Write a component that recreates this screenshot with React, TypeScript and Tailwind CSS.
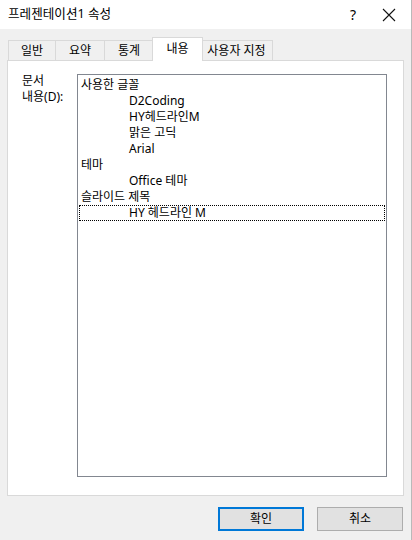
const FONT = "font-['Noto_Sans','Noto_Sans_CJK_KR',sans-serif]";

const TABS = ["일반", "요약", "통계", "내용", "사용자 지정"];
const ACTIVE = 3;

const ITEMS: { text: string; indent?: boolean; focus?: boolean }[] = [
  { text: "사용한 글꼴" },
  { text: "D2Coding", indent: true },
  { text: "HY헤드라인M", indent: true },
  { text: "맑은 고딕", indent: true },
  { text: "Arial", indent: true },
  { text: "테마" },
  { text: "Office 테마", indent: true },
  { text: "슬라이드 제목" },
  { text: "HY 헤드라인 M", indent: true, focus: true },
];

export default function App() {
  return (
    <div className={`${FONT} w-[412px] h-[540px] bg-[#f0f0f0] border-r border-[#b9b9b9] text-[12px] text-black flex flex-col`}>
      {/* Title bar */}
      <div className="h-[29px] bg-white flex items-center shrink-0">
        <span className="pl-2 flex-1 leading-none text-[12.6px]">프레젠테이션1 속성</span>
        <span className="w-[16px] text-center text-[14px] leading-none mr-[21px]">?</span>
        <svg width="14" height="14" viewBox="0 0 14 14" className="mr-[15px]" fill="none" stroke="#111" strokeWidth="1.1">
          <path d="M1 1L13 13M13 1L1 13" />
        </svg>
      </div>

      {/* Tabs */}
      <div className="mt-[8px] flex items-end pl-[8px] h-[23px] relative z-10">
        {TABS.map((t, i) =>
          i === ACTIVE ? (
            <div
              key={t}
              className="h-[24px] mb-[-1px] bg-white border border-b-0 border-[#d9d9d9] flex items-start justify-center pt-[2px] mx-[-2px] relative z-10"
              style={{ width: 51 }}
            >
              {t}
            </div>
          ) : (
            <div
              key={t}
              className="h-[20px] bg-[#f0f0f0] border border-b-0 border-[#d9d9d9] flex items-center justify-center -ml-px first:ml-0"
              style={{ width: i === 4 ? 73 : i === 0 ? 48 : 50 }}
            >
              {t}
            </div>
          )
        )}
      </div>

      {/* Panel */}
      <div className="mx-[7px] h-[436px] bg-white border border-[#d9d9d9] flex pt-[13px] pl-[14px] shrink-0">
        <div className="w-[55px] leading-[16px] -mt-px">
          <div>문서</div>
          <div>내용(D):</div>
        </div>
        <div className="w-[310px] h-[403px] border border-[#828790] bg-white pt-[2px] pl-px pr-px">
          {ITEMS.map((it) => (
            <div
              key={it.text}
              className={`h-[16px] leading-[16px] border ${it.focus ? "border-dotted border-black" : "border-transparent"} flex items-center`}
            >
              <span className={`${it.indent ? "pl-[49px]" : "pl-[1px]"} whitespace-nowrap`}>{it.text}</span>
            </div>
          ))}
        </div>
      </div>

      {/* Buttons */}
      <div className="mt-[11px] flex justify-end gap-[13px] pr-[8px]">
        <button className="w-[86px] h-[24px] bg-[#e1e1e1] border-2 border-[#0078d7] flex items-center justify-center">
          확인
        </button>
        <button className="w-[86px] h-[24px] bg-[#e1e1e1] border border-[#adadad] flex items-center justify-center">
          취소
        </button>
      </div>
    </div>
  );
}
